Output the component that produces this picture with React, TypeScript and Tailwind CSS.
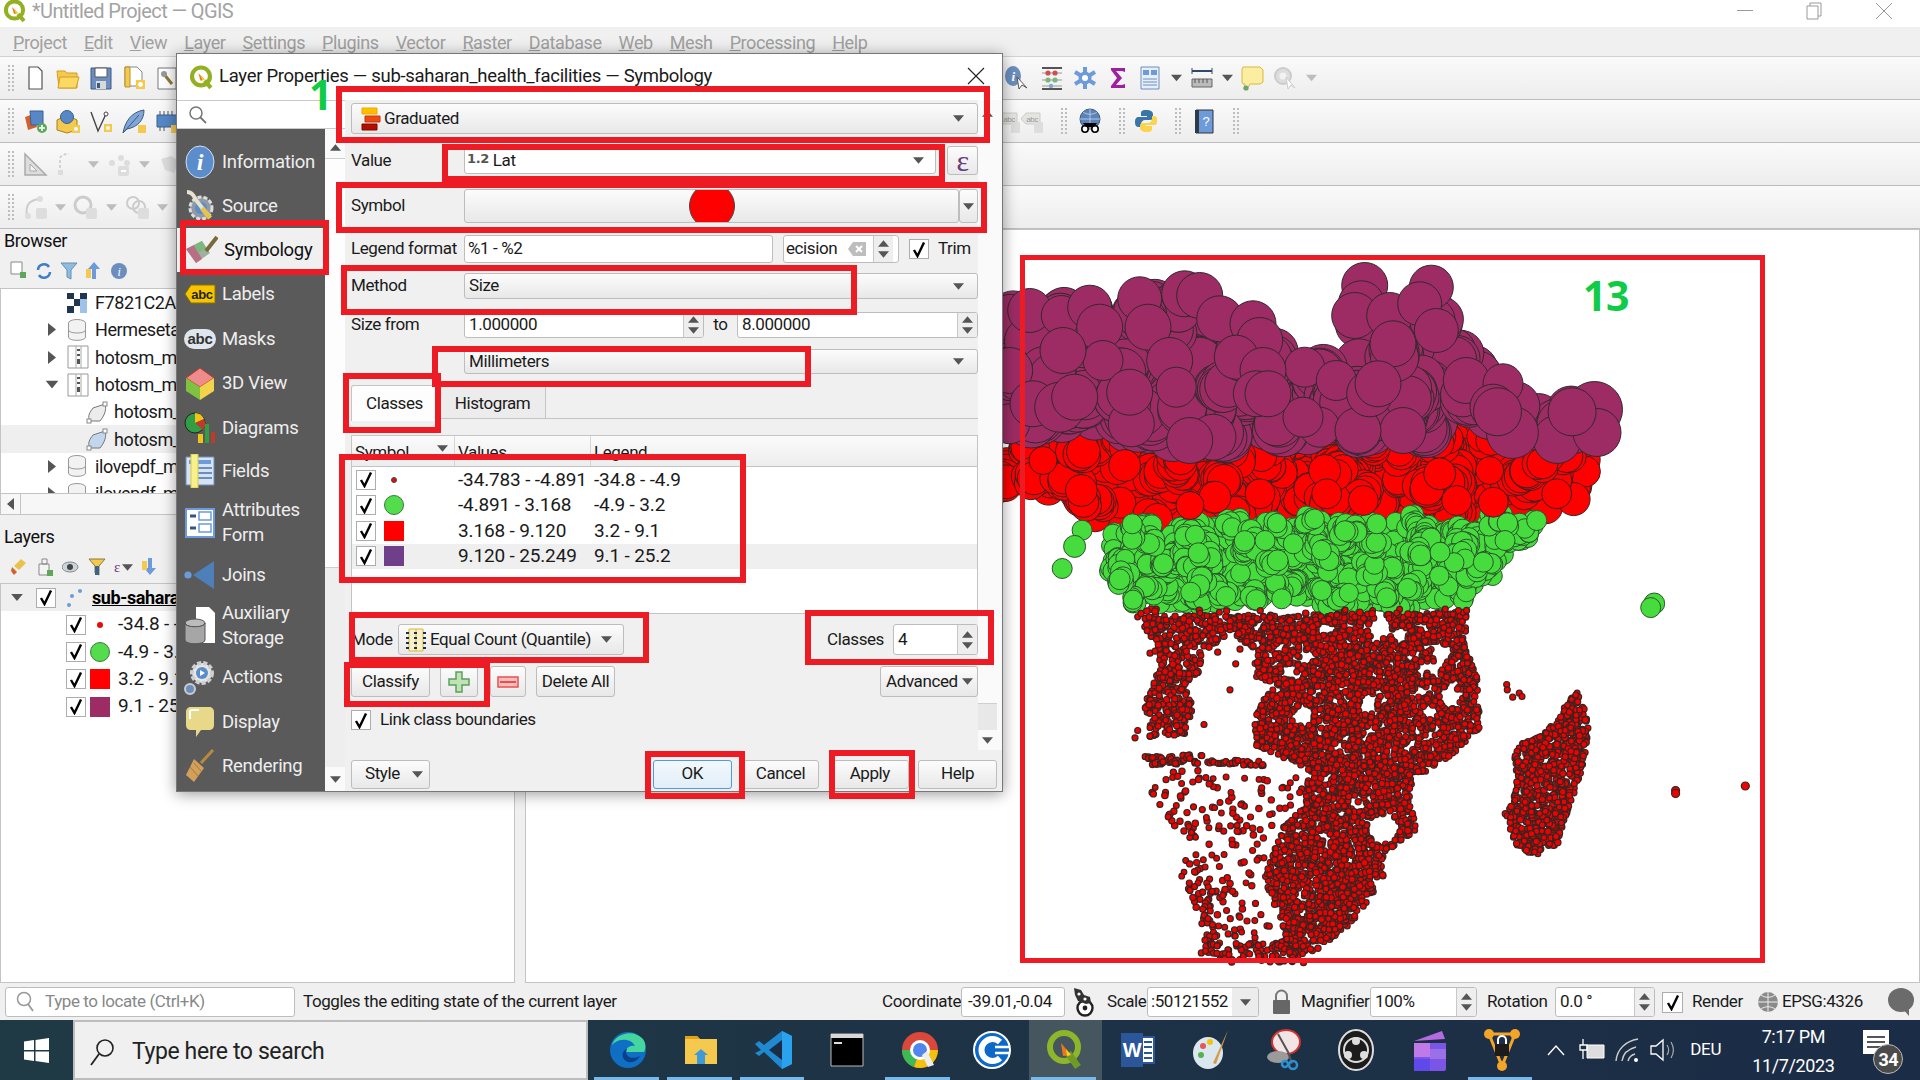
import type { ReactNode } from "react";

// ---- map data: seeded so every render gives the same picture ----
type Pt = [number, number];
type Dot = { x: number; y: number; r: number };

function rng(seed: number) {
  let a = seed;
  return () => {
    a = (a + 0x6d2b79f5) | 0;
    let t = Math.imul(a ^ (a >>> 15), 1 | a);
    t = (t + Math.imul(t ^ (t >>> 7), 61 | t)) ^ t;
    return ((t ^ (t >>> 14)) >>> 0) / 4294967296;
  };
}

function inPoly(p: Pt, poly: Pt[]) {
  let inside = false;
  for (let i = 0, j = poly.length - 1; i < poly.length; j = i++) {
    const [xi, yi] = poly[i];
    const [xj, yj] = poly[j];
    if (yi > p[1] !== yj > p[1] && p[0] < ((xj - xi) * (p[1] - yi)) / (yj - yi) + xi) inside = !inside;
  }
  return inside;
}

// coordinates were read off zoomed crops, these turn them back into page pixels
const z = (x: number, y: number): Pt => [1000 + x / 2.01, 250 + y / 2.17];
const a = (x: number, y: number): Pt => [1100 + x / 3, 480 + y / 3];
const b = (x: number, y: number): Pt => [1003 + x / 3, 260 + y / 3];
const c = (x: number, y: number): Pt => [1100 + x / 3, 700 + y / 3];

function fill(poly: Pt[], count: number, rMin: number, rMax: number, seed: number, keep?: (p: Pt, roll: number) => boolean) {
  const rand = rng(seed);
  const xs = poly.map((p) => p[0]);
  const ys = poly.map((p) => p[1]);
  const x0 = Math.min(...xs);
  const x1 = Math.max(...xs);
  const y0 = Math.min(...ys);
  const y1 = Math.max(...ys);
  const out: Dot[] = [];
  let guard = 0;
  while (out.length < count && guard < count * 80) {
    guard++;
    const p: Pt = [x0 + rand() * (x1 - x0), y0 + rand() * (y1 - y0)];
    if (!inPoly(p, poly)) continue;
    if (keep && !keep(p, rand())) continue;
    out.push({ x: p[0], y: p[1], r: rMin + rand() * (rMax - rMin) });
  }
  return out;
}

// facilities sit in towns, so the big circles come in tight clumps
function clumps(poly: Pt[], centers: number, each: number, spread: number, rMin: number, rMax: number, seed: number) {
  const rand = rng(seed + 1000);
  const out: Dot[] = [];
  for (const d of fill(poly, centers, rMin, rMax, seed)) {
    for (let i = 0; i < each; i++) {
      out.push({ x: d.x + (rand() - 0.5) * spread, y: d.y + (rand() - 0.5) * spread, r: d.r });
    }
  }
  return out;
}

function line(from: Pt, to: Pt, count: number, jitter: number, seed: number) {
  const rand = rng(seed);
  const out: Dot[] = [];
  for (let i = 0; i < count; i++) {
    const t = i / (count - 1);
    out.push({ x: from[0] + (to[0] - from[0]) * t + (rand() - 0.5) * jitter, y: from[1] + (to[1] - from[1]) * t + (rand() - 0.5) * jitter, r: 3 });
  }
  return out;
}

const spot = (list: [Pt, number][]) => list.map(([p, r]) => ({ x: p[0], y: p[1], r }));

const purplePoly: Pt[] = [z(-60, 130), z(60, 130), z(180, 130), z(285, 115), z(400, 100), z(500, 180), z(560, 240), z(620, 270), z(690, 260), z(725, 110), z(860, 95), z(900, 190), z(960, 270), z(1040, 340), z(1195, 350), z(1200, 395), z(1100, 400), z(900, 385), z(800, 395), z(620, 395), z(350, 410), z(200, 370), z(-60, 380)];
const redPoly: Pt[] = [[1000, 445], [1600, 430], [1575, 500], [1510, 515], [1100, 520], [1050, 490], [1000, 482]];
const greenPoly: Pt[] = [[1107, 556], [1110, 530], [1130, 522], [1543, 518], [1517, 543], [1477, 583], [1457, 603], [1140, 603], [1120, 582]];

const mainPoly: Pt[] = [a(385, 405), a(1100, 395), a(1095, 500), a(1130, 590), a(1140, 740), a(1070, 810), a(980, 875), a(940, 880), a(930, 960), a(950, 1050), c(850, 460), c(850, 530), c(780, 640), c(680, 735), c(600, 770), c(540, 760), c(550, 640), c(490, 540), c(550, 380), c(620, 310), c(600, 260), c(640, 220), c(590, 190), c(460, 130), c(470, 20), a(530, 610), a(470, 590), a(460, 520), a(395, 450)];
const westPoly: Pt[] = [a(110, 405), a(395, 405), a(395, 450), a(310, 520), a(300, 570), a(280, 600), a(250, 620), a(270, 650), a(280, 700), a(260, 760), a(150, 770), a(130, 690), a(160, 600), a(180, 520), a(130, 450)];
const sparsePoly: Pt[] = [c(140, 200), c(640, 230), c(600, 300), c(500, 400), c(490, 550), c(560, 620), c(560, 740), c(330, 740), c(260, 570), c(180, 350), c(140, 260)];
const madagascar: Pt[] = [a(1432, 630), c(1470, 60), c(1450, 190), c(1370, 440), c(1300, 470), c(1250, 440), c(1215, 340), c(1250, 240), c(1240, 170), c(1260, 130), c(1340, 95), c(1380, 40)];

// white patches inside the dense part: [x, y, rx, ry] in crop units
const gaps = [[840, 445, 35, 30], [900, 465, 22, 28], [1025, 515, 25, 25], [990, 560, 35, 18], [680, 445, 30, 18], [620, 530, 22, 22], [575, 585, 30, 12], [805, 665, 25, 30], [965, 635, 25, 15], [1050, 650, 30, 35], [990, 690, 25, 15], [610, 705, 32, 30], [735, 775, 15, 10], [810, 755, 20, 8], [850, 1045, 50, 45], [670, 1065, 20, 15], [775, 980, 18, 10], [720, 1000, 12, 8]];

function inGap(p: Pt) {
  const ax = (p[0] - 1100) * 3;
  const ay = (p[1] - 480) * 3;
  return gaps.some(([x, y, rx, ry]) => ((ax - x) / rx) ** 2 + ((ay - y) / ry) ** 2 < 1);
}

const redDots = [...fill(redPoly, 220, 15, 17, 13), ...clumps(redPoly, 100, 6, 12, 15, 17, 11)];
const purpleDots = [
  ...fill(purplePoly, 130, 22, 25, 9),
  ...clumps(purplePoly, 85, 6, 13, 22, 25, 7),
  ...spot([[b(80, 150), 22], [b(175, 165), 20], [b(260, 140), 22], [b(290, 200), 23], [b(410, 115), 22], [b(435, 200), 23], [b(545, 100), 23], [b(590, 105), 23], [b(650, 175), 23], [b(750, 190), 23], [b(770, 240), 23], [b(905, 320), 20], [b(1085, 75), 23], [b(1075, 130), 23], [b(1055, 165), 23], [b(1160, 165), 23], [b(1285, 80), 22], [b(1250, 130), 22], [b(1300, 210), 22], [b(1170, 250), 23], [b(700, 290), 22], [b(780, 330), 23], [b(1000, 360), 20], [b(300, 300), 20], [b(180, 270), 23], [b(500, 300), 23], [b(520, 380), 20], [b(20, 330), 23], [b(1390, 360), 23], [b(1500, 370), 20], [b(630, 530), 23], [b(560, 540), 23], [b(820, 490), 22], [b(950, 500), 20], [b(900, 470), 20], [b(20, 490), 20], [b(1470, 440), 23], [b(1520, 510), 23], [b(1200, 510), 23], [b(1065, 510), 23], [b(90, 430), 23], [b(170, 440), 25], [b(215, 410), 23], [b(385, 490), 23], [b(380, 395), 23], [b(760, 400), 23], [b(795, 400), 23], [b(1100, 400), 23], [b(1125, 370), 23], [z(1120, 410), 24], [z(1195, 345), 28], [z(1200, 395), 24], [z(1150, 350), 24], [z(1030, 395), 26], [z(1000, 350), 24]]),
];
const greenDots = [
  ...fill(greenPoly, 420, 9.5, 10.5, 29),
  ...clumps(greenPoly, 130, 7, 13, 9.5, 10.5, 23),
  ...spot([[z(165, 607), 10], [z(150, 642), 11], [z(125, 690), 10], [z(1315, 766), 10.5], [z(1308, 775), 10]]),
  ...spot([[a(97, 130), 10], [a(190, 250), 10], [a(272, 335), 10], [a(378, 348), 10], [a(545, 355), 10], [a(495, 180), 10], [a(580, 190), 10], [a(665, 330), 10], [a(830, 130), 10], [a(860, 352), 10], [a(1020, 215), 10], [a(1150, 245), 10], [a(1215, 180), 10], [a(1310, 120), 10]]),
];
const redOver = spot([[b(365, 615), 16], [b(630, 710), 16], [b(965, 630), 16], [b(235, 690), 16], [b(120, 600), 14], [b(1310, 640), 16], [b(1460, 630), 14], [a(345, 50), 16], [a(1180, 65), 15], [a(1370, 40), 15], [a(270, 75), 14], [a(480, 40), 15], [a(680, 40), 15], [a(790, 60), 15], [a(1070, 60), 15]]);
const smallDots = [
  ...fill(mainPoly, 4100, 2.8, 3.2, 31, (p) => !inGap(p)),
  ...fill(westPoly, 460, 2.8, 3.2, 33),
  ...fill(sparsePoly, 190, 2.8, 3.2, 35),
  ...line(c(145, 180), c(300, 175), 46, 9, 51),
  ...line(c(330, 180), c(490, 190), 28, 5, 53),
  ...line(c(320, 600), c(335, 740), 30, 16, 55),
  ...line(c(320, 750), c(600, 760), 80, 18, 57),
  ...line(c(270, 560), c(370, 585), 14, 14, 59),
  ...fill(madagascar, 760, 2.8, 3.2, 41),
  ...fill([a(110, 385), a(1100, 385), a(1100, 402), a(110, 402)], 28, 2.8, 3.2, 43),
  ...spot([[a(353, 515), 3], [a(407, 550), 3], [a(390, 628), 3], [a(312, 732), 3], [a(113, 750), 3], [a(105, 772), 3], [a(420, 506), 3], [a(440, 483), 3], [a(150, 518), 3], [a(165, 512), 3]]),
  ...spot([[a(1220, 612), 3], [a(1222, 628), 3], [a(1238, 650), 3], [a(1258, 638), 3], [a(1266, 648), 3], [z(1358, 1172), 4], [z(1358, 1178), 4], [z(1498, 1162), 4], [c(395, 785), 3]]),
];

function Circles({ dots, fillColor, stroke, width = 1 }: { dots: Dot[]; fillColor: string; stroke: string; width?: number }) {
  return (
    <g fill={fillColor} stroke={stroke} strokeWidth={width}>
      {dots.map((d, i) => (
        <circle key={i} cx={d.x.toFixed(1)} cy={d.y.toFixed(1)} r={d.r.toFixed(1)} />
      ))}
    </g>
  );
}

function MapCanvas() {
  return (
    <svg className="block w-full h-full" viewBox="526 230 1393 751">
      <Circles dots={redDots} fillColor="#ff0000" stroke="#3a2222" />
      <Circles dots={purpleDots} fillColor="#9c2c63" stroke="#33282f" />
      <Circles dots={greenDots} fillColor="#46dc3e" stroke="#2c532c" />
      <Circles dots={redOver} fillColor="#ff0000" stroke="#3a2222" />
      <Circles dots={smallDots} fillColor="#f00000" stroke="#3a2420" width={1.2} />
    </svg>
  );
}

// ---- small widgets ----
function Caret({ color = "#555", w = 11, h = 7 }: { color?: string; w?: number; h?: number }) {
  return (
    <svg width={w} height={h} viewBox="0 0 10 6" className="shrink-0">
      <path d="M0 0h10L5 6z" fill={color} />
    </svg>
  );
}

function CaretUp({ color = "#555" }: { color?: string }) {
  return (
    <svg width="11" height="7" viewBox="0 0 10 6" className="shrink-0">
      <path d="M0 6h10L5 0z" fill={color} />
    </svg>
  );
}

function Check({ size = "w-[20px] h-[20px]" }: { size?: string }) {
  return (
    <div className={`${size} shrink-0 bg-white border border-[#adadad] flex items-center justify-center`}>
      <svg width="14" height="17" viewBox="0 0 14 17">
        <path d="M2 9l3.5 6L12 1.5" fill="none" stroke="#000" strokeWidth="2.4" />
      </svg>
    </div>
  );
}

function Spin() {
  return (
    <div className="w-[20px] self-stretch shrink-0 border-l border-[#c8c8c8] bg-[#eeeeee] flex flex-col items-center justify-center gap-[4px]">
      <CaretUp />
      <Caret />
    </div>
  );
}

const comboClass = "flex items-center justify-between rounded-[3px] border border-[#bdbdbd] bg-gradient-to-b from-[#fcfcfc] to-[#e8e8e8]";
const inputClass = "flex items-center rounded-[3px] border border-[#bdbdbd] bg-white";

function Btn({ children, className = "" }: { children: ReactNode; className?: string }) {
  return <div className={`${comboClass} !justify-center h-[31px] ${className}`}>{children}</div>;
}

function QgisLogo({ size = 24 }: { size?: number }) {
  return (
    <svg width={size} height={size} viewBox="0 0 24 24" className="shrink-0">
      <circle cx="11.5" cy="11" r="8.6" fill="#fff" stroke="#93b023" strokeWidth="4" />
      <path d="M15 15l6 7" stroke="#93b023" strokeWidth="4" />
      <path d="M9 8l6 6-4 1z" fill="#ee7913" />
      <path d="M11 10l4 4-2 1z" fill="#f5d327" />
    </svg>
  );
}

// ---- toolbar icons ----
const Svg = ({ children, w = 26 }: { children: ReactNode; w?: number }) => (
  <svg width={w} height={w} viewBox="0 0 26 26" className="shrink-0">
    {children}
  </svg>
);

const IconNew = () => <Svg><path d="M7 2h9l4 4v18H7z" fill="#fff" stroke="#555" strokeWidth="1.2" /></Svg>;
const IconOpen = () => <Svg><path d="M2 6h8l2 2h10v15H4z" fill="#f5c94d" stroke="#d59c1e" /><path d="M5 12h19l-3 11H3z" fill="#fbd964" stroke="#d59c1e" /></Svg>;
const IconSave = () => <Svg><path d="M3 3h20v21H3z" fill="#6c8ebf" stroke="#3d5a80" /><path d="M7 3h12v9H7z" fill="#fff" stroke="#555" /><path d="M8 16h10v8H8z" fill="#d9d9d9" /><path d="M9 18h3v5H9z" fill="#3d5a80" /></Svg>;
const IconSaveAs = () => <Svg><path d="M4 2h12l5 5v14H4z" fill="#fff" stroke="#888" /><path d="M4 2h5v20H4z" fill="#f5c94d" stroke="#b8912a" /><path d="M15 15h9v9h-9z" fill="#f5c94d" /><circle cx="19.5" cy="19.5" r="2.4" fill="#fff" /></Svg>;
const IconDoc = () => <Svg><path d="M4 3h18v21H4z" fill="#fff" stroke="#777" /><path d="M9 8l9 11" stroke="#8a7b3b" strokeWidth="3" /><circle cx="10" cy="9" r="3" fill="#999" /></Svg>;
const IconStack = () => <Svg><path d="M3 9l9-3 3 13-9 3z" fill="#d3602c" /><path d="M8 3h13v14H9z" fill="#5787c6" stroke="#39618f" /><circle cx="20" cy="20" r="5" fill="#5da75a" /><path d="M17 20h6M20 17v6" stroke="#fff" strokeWidth="1.6" /></Svg>;
const IconCube = () => <Svg><path d="M2 12l10-5 10 5v10l-10 3-10-3z" fill="#f5c94d" stroke="#a5821a" /><circle cx="12" cy="9" r="6.5" fill="#5787c6" stroke="#39618f" /><path d="M17 17h8v8h-8z" fill="#f5c94d" /><circle cx="21" cy="21" r="2" fill="#fff" /></Svg>;
const IconVector = () => <Svg><path d="M3 4l7 19 8-17" fill="none" stroke="#444" strokeWidth="1.4" /><circle cx="18" cy="6" r="2" fill="#fff" stroke="#444" /><path d="M16 16h8v8h-8z" fill="#f5c94d" /><circle cx="20" cy="20" r="2" fill="#fff" /></Svg>;
const IconFeather = () => <Svg><path d="M2 25C4 14 10 4 23 2c0 10-6 17-17 19z" fill="#7fa6d6" stroke="#3d5a80" /><path d="M2 25L18 7" stroke="#3d5a80" /><path d="M17 17h8v8h-8z" fill="#f5c94d" /></Svg>;
const IconChip = () => <Svg><path d="M3 7h20v12H3z" fill="#5787c6" stroke="#39618f" /><path d="M6 3v4M10 3v4M14 3v4M18 3v4M6 19v4M10 19v4" stroke="#555" /><path d="M17 17h8v8h-8z" fill="#f5c94d" /></Svg>;
const IconRuler = () => <Svg><path d="M3 3v21h21z" fill="#ddd" stroke="#aaa" strokeWidth="1.5" /><path d="M8 13v7h7z" fill="#f3f3f3" stroke="#aaa" /></Svg>;
const IconGhost1 = () => <Svg><path d="M5 22V8c0-3 3-5 9-5" fill="none" stroke="#ccc" strokeWidth="1.6" strokeDasharray="3 2" /><rect x="3" y="19" width="5" height="5" fill="#ddd" /></Svg>;
const IconGhost2 = () => <Svg><circle cx="6" cy="12" r="3" fill="#ddd" /><circle cx="15" cy="7" r="3" fill="#ddd" /><circle cx="21" cy="12" r="3" fill="#ddd" /><rect x="12" y="15" width="11" height="10" rx="2" fill="#ddd" /><path d="M15 20h5" stroke="#fff" strokeWidth="2" /></Svg>;
const IconGhost3 = () => <Svg><path d="M4 8l10-3 8 5-5 12-9-3z" fill="#ddd" /></Svg>;
const IconGhost4 = () => <Svg><path d="M5 22C3 10 8 6 18 5" fill="none" stroke="#ccc" strokeWidth="2" /><circle cx="6" cy="22" r="3" fill="#ddd" /><circle cx="18" cy="5" r="3" fill="#ddd" /><rect x="14" y="14" width="11" height="11" rx="2" fill="#ddd" /></Svg>;
const IconGhost5 = () => <Svg><circle cx="11" cy="11" r="8" fill="none" stroke="#ccc" strokeWidth="3" /><rect x="14" y="14" width="11" height="11" rx="2" fill="#ddd" /></Svg>;
const IconGhost6 = () => <Svg><circle cx="9" cy="9" r="6" fill="none" stroke="#ccc" strokeWidth="2" /><circle cx="15" cy="13" r="6" fill="none" stroke="#ccc" strokeWidth="2" /><rect x="14" y="14" width="11" height="11" rx="2" fill="#ddd" /></Svg>;
const IconIdentify = () => <Svg><ellipse cx="10" cy="11" rx="8" ry="10" fill="#6c8ebf" /><text x="10" y="16" fontSize="13" fontStyle="italic" fontWeight="700" fill="#fff" textAnchor="middle" fontFamily="Liberation Serif">i</text><path d="M14 12l2 12 3-4 5 3z" fill="#fff" stroke="#555" /></Svg>;
const IconAbacus = () => <Svg><path d="M3 3h20M3 24h20" stroke="#555" strokeWidth="2" /><path d="M3 8h20M3 15h20M3 21h20" stroke="#999" /><circle cx="9" cy="8" r="2.6" fill="#d05050" /><circle cx="16" cy="8" r="2.6" fill="#d05050" /><circle cx="9" cy="15" r="2.6" fill="#7cb87c" /><circle cx="16" cy="15" r="2.6" fill="#7cb87c" /><circle cx="12" cy="21" r="2.2" fill="#7fa6d6" /></Svg>;
const IconGear = () => <Svg><path d="M13 2v22M3 7l20 12M3 19L23 7" stroke="#6c9adb" strokeWidth="4" /><circle cx="13" cy="13" r="6.5" fill="#6c9adb" /><circle cx="13" cy="13" r="3" fill="#fff" /></Svg>;
const IconSigma = () => <Svg><path d="M6 3h14v4l-3-1H11l6 7-6 7h6l3-1v4H6v-2l6-8-6-8z" fill="#a01fa0" /></Svg>;
const IconTable = () => <Svg><path d="M4 2h18v22H4z" fill="#e6eff8" stroke="#6c8ebf" /><path d="M6 5h6v5H6zM14 5h6v5h-6z" fill="#6c9adb" /><path d="M6 14h14M6 17h14M6 20h14" stroke="#6c8ebf" /></Svg>;
const IconMeasure = () => <Svg><path d="M3 6h20" stroke="#2f4a6d" strokeWidth="2" /><path d="M3 3v6M23 3v6" stroke="#2f4a6d" /><path d="M3 14h20v8H3z" fill="#bbb" stroke="#666" /><path d="M6 14v4M10 14v4M14 14v4M18 14v4" stroke="#555" /></Svg>;
const IconNote = () => <Svg><path d="M4 2h17l3 3v12l-3 2H11l-3 5H5l1-5H4l-1-2V4z" fill="#fbeea0" stroke="#d9b93a" /><circle cx="7" cy="23" r="2.6" fill="#6da36d" /></Svg>;
const IconGhostGear = () => <Svg><circle cx="12" cy="11" r="8" fill="#ddd" stroke="#ccc" strokeWidth="2" /><circle cx="12" cy="11" r="3.5" fill="#f2f2f2" /><path d="M15 12l2 12 3-4 4 3z" fill="#fff" stroke="#ccc" /></Svg>;
const IconGlobeFind = () => <Svg><circle cx="13" cy="11" r="10" fill="#5b83b8" stroke="#3d5a80" /><path d="M3 11h20M13 1v20M6 4c4 3 10 3 14 0" stroke="#c8d9ee" fill="none" strokeWidth=".8" /><circle cx="8" cy="21" r="3.2" fill="#fff" stroke="#000" strokeWidth="1.6" /><circle cx="18" cy="21" r="3.2" fill="#fff" stroke="#000" strokeWidth="1.6" /><path d="M6 15l3 4h8l3-4z" fill="#000" /></Svg>;
const IconPython = () => <Svg><path d="M13 2c-5 0-5 2-5 4v2h6v1H6c-3 0-4 2-4 5s1 5 4 5h2v-3c0-2 2-4 4-4h5c2 0 3-1 3-3V6c0-2-2-4-7-4z" fill="#3a75a8" /><path d="M14 24c5 0 5-2 5-4v-2h-6v-1h8c3 0 3-2 3-5s-1-4-3-4h-2v3c0 2-2 4-4 4H10c-2 0-3 1-3 3v2c0 2 2 4 7 4z" fill="#fcd34d" /></Svg>;
const IconHelpBook = () => <Svg><path d="M5 2h17v23H5z" fill="#6c9adb" stroke="#333" /><path d="M4 2h4v23H4z" fill="#2e3a46" /><text x="15" y="18" fontSize="13" fill="#fff" textAnchor="middle" fontFamily="Liberation Sans">?</text></Svg>;
const IconGhostLabel = () => <Svg><path d="M2 11l5-6h14v11H7z" fill="#e4e4e0" stroke="#ccc" /><text x="13" y="14" fontSize="8" fill="#999" textAnchor="middle" fontFamily="Liberation Sans">abc</text><rect x="15" y="14" width="9" height="11" rx="1" fill="#ddd" /></Svg>;

function Grip() {
  return <div className="w-[6px] h-[26px] shrink-0 border-x-2 border-dotted border-[#bdbdbd]" />;
}

// holds one toolbar icon in a fixed slot so the rows line up
function Slot({ children, w = "w-[33px]" }: { children?: ReactNode; w?: string }) {
  return <div className={`${w} h-full shrink-0 flex items-center justify-center`}>{children}</div>;
}

function Toolbar({ left, right }: { left: ReactNode; right?: ReactNode }) {
  return (
    <div className="h-[43px] flex items-center border-b border-[#bcbcbc] bg-gradient-to-b from-[#fafafa] to-[#ededed]">
      <div className="w-[1000px] h-full shrink-0 flex items-center pl-[8px]">
        <Grip />
        <div className="w-[4px] shrink-0" />
        {left}
      </div>
      <div className="flex items-center h-full">{right}</div>
    </div>
  );
}

// ---- dialog sidebar ----
const SideIcons: Record<string, ReactNode> = {
  Information: (
    <svg width="30" height="34" viewBox="0 0 30 34">
      <ellipse cx="15" cy="17" rx="14" ry="16" fill="#5b8ccb" stroke="#cfe0f4" />
      <text x="15" y="25" fontSize="24" fontStyle="italic" fontWeight="700" fill="#fff" textAnchor="middle" fontFamily="Liberation Serif">i</text>
    </svg>
  ),
  Source: (
    <svg width="32" height="32" viewBox="0 0 32 32">
      <circle cx="17" cy="18" r="11" fill="#8f9aa5" stroke="#ddd" strokeDasharray="4 2" strokeWidth="3" />
      <circle cx="17" cy="18" r="6" fill="#5b8ccb" />
      <path d="M3 2c5 0 7 4 9 8l14 18" stroke="#e7e2d0" strokeWidth="4" fill="none" />
      <path d="M18 18l8 10" stroke="#e9c24b" strokeWidth="5" />
    </svg>
  ),
  Symbology: (
    <svg width="34" height="30" viewBox="0 0 34 30">
      <path d="M2 14l16-8 8 12-14 10z" fill="#9fb0a0" />
      <path d="M2 14l8-4 8 14-6 4z" fill="#c25a7a" opacity=".75" />
      <path d="M10 10l8-4 4 7-8 5z" fill="#7cb87c" />
      <path d="M22 16L33 2" stroke="#7a6a3a" strokeWidth="4" />
    </svg>
  ),
  Labels: (
    <svg width="32" height="22" viewBox="0 0 32 22">
      <path d="M1 11l6-9h24v18H7z" fill="#f6c500" stroke="#8a7000" />
      <text x="18" y="16" fontSize="13" fontWeight="700" fill="#222" textAnchor="middle" fontFamily="Liberation Sans">abc</text>
    </svg>
  ),
  Masks: (
    <svg width="34" height="24" viewBox="0 0 34 24">
      <rect x="1" y="2" width="32" height="20" rx="10" fill="#dfe6ee" />
      <text x="17" y="17" fontSize="15" fontWeight="700" fill="#333" textAnchor="middle" fontFamily="Liberation Sans">abc</text>
    </svg>
  ),
  "3D View": (
    <svg width="30" height="34" viewBox="0 0 30 34">
      <path d="M15 1l14 10-14 9L1 11z" fill="#ef8b8b" stroke="#c0392b" />
      <path d="M1 11l14 9v13L1 24z" fill="#7fc241" />
      <path d="M29 11l-14 9v13l14-9z" fill="#f3d34a" />
    </svg>
  ),
  Diagrams: (
    <svg width="32" height="32" viewBox="0 0 32 32">
      <circle cx="11" cy="11" r="10" fill="#2f9e44" stroke="#222" />
      <path d="M11 11V1a10 10 0 0 1 9 6z" fill="#f0c419" />
      <path d="M11 11l9-4a10 10 0 0 1-1 11z" fill="#c0392b" />
      <path d="M14 22h5v9h-5z" fill="#f0c419" />
      <path d="M21 12h4v19h-4z" fill="#2f9e44" />
      <path d="M27 20h4v11h-4z" fill="#c0392b" />
    </svg>
  ),
  Fields: (
    <svg width="30" height="34" viewBox="0 0 30 34">
      <path d="M1 3h28v28H1z" fill="#d5e3f3" stroke="#6c8ebf" />
      <path d="M4 6h22v4H4z" fill="#6c9adb" />
      <path d="M12 14h15M12 19h15M12 24h15" stroke="#6c8ebf" strokeWidth="2" />
      <path d="M6 0h7v34H6z" fill="#f8f08a" stroke="#d8c94a" />
    </svg>
  ),
  "Attributes Form": (
    <svg width="30" height="30" viewBox="0 0 30 30">
      <path d="M1 1h28v28H1z" fill="#fff" stroke="#6c9adb" strokeWidth="2" />
      <path d="M5 8h6M5 20h6" stroke="#33587f" strokeWidth="3" />
      <path d="M14 4h12v8H14zM14 16h12v8H14z" fill="#fff" stroke="#6c9adb" strokeWidth="1.5" />
    </svg>
  ),
  Joins: (
    <svg width="32" height="30" viewBox="0 0 32 30">
      <circle cx="4" cy="15" r="3.6" fill="#6c9adb" />
      <path d="M30 1v28L9 15z" fill="#4f7fb8" />
    </svg>
  ),
  "Auxiliary Storage": (
    <svg width="32" height="40" viewBox="0 0 32 40">
      <path d="M12 1h13l6 6v30H12z" fill="#fff" />
      <ellipse cx="11" cy="17" rx="10" ry="4" fill="#bbb" stroke="#555" />
      <path d="M1 17v17c0 5 20 5 20 0V17c0 5-20 5-20 0z" fill="#a6a6a6" stroke="#555" />
    </svg>
  ),
  Actions: (
    <svg width="32" height="36" viewBox="0 0 32 36">
      <circle cx="18" cy="13" r="10" fill="#e6e6e6" stroke="#cfcfcf" strokeWidth="4" strokeDasharray="4 2" />
      <circle cx="18" cy="13" r="6" fill="#5b8ccb" />
      <path d="M16 10l5 3-5 3z" fill="#fff" />
      <circle cx="6" cy="29" r="5" fill="#6c8ebf" stroke="#ccc" strokeWidth="2" />
    </svg>
  ),
  Display: (
    <svg width="30" height="32" viewBox="0 0 30 32">
      <path d="M6 1h18c3 0 5 2 5 5v13c0 3-2 5-5 5H16l-5 7v-7H6c-3 0-5-2-5-5V6c0-3 2-5 5-5z" fill="#e8d98a" />
      <path d="M5 13V6c0-1 1-2 2-2h7" stroke="#fff" strokeWidth="2" fill="none" />
    </svg>
  ),
  Rendering: (
    <svg width="30" height="34" viewBox="0 0 30 34">
      <path d="M16 14L28 1" stroke="#b88a3f" strokeWidth="3" />
      <path d="M9 10l10 9-10 14-8-7z" fill="#d2a05a" />
      <path d="M5 18l8 9M9 14l7 8" stroke="#a87a38" />
    </svg>
  ),
};

function SideItem({ label, h = "h-[44px]", active = false }: { label: string; h?: string; active?: boolean }) {
  const lines = label.split(" ");
  return (
    <div className={`${h} flex items-center shrink-0 text-[18.5px] tracking-[-0.3px] ${active ? "bg-[#f0f0f0] text-[#111]" : "text-[#eeeeee]"}`}>
      <div className={`${active ? "w-[47px]" : "w-[45px]"} shrink-0 flex justify-center`}>{SideIcons[label]}</div>
      {label === "3D View" ? <span>{label}</span> : <div className="leading-[25px] flex flex-col">{lines.map((l) => <span key={l}>{l}</span>)}</div>}
    </div>
  );
}

// ---- dialog body pieces ----
function Row({ label, className, children }: { label?: string; className: string; children: ReactNode }) {
  return (
    <div className={`flex items-center ${className}`}>
      <div className="w-[113px] shrink-0">{label}</div>
      {children}
    </div>
  );
}

const classRows = [
  { values: "-34.783 - -4.891", legend: "-34.8 - -4.9", swatch: <div className="w-[6px] h-[6px] rounded-full bg-[#e60c0c] border border-[#444]" /> },
  { values: "-4.891 - 3.168", legend: "-4.9 - 3.2", swatch: <div className="w-[20px] h-[20px] rounded-full bg-[#53dd4c] border border-[#3b7a3b]" /> },
  { values: "3.168 - 9.120", legend: "3.2 - 9.1", swatch: <div className="w-[20px] h-[20px] bg-[#ff0000]" /> },
  { values: "9.120 - 25.249", legend: "9.1 - 25.2", swatch: <div className="w-[20px] h-[20px] bg-[#6f4089]" />, alt: true },
];

function GraduatedIcon() {
  return (
    <svg width="20" height="24" viewBox="0 0 20 24" className="shrink-0">
      <path d="M1 1h15v6H1z" fill="#ffc000" stroke="#f2a900" />
      <path d="M4 9h15v6H4z" fill="#ef4a10" stroke="#c0380c" />
      <path d="M1 17h15v6H1z" fill="#b30f00" stroke="#7c0a00" />
    </svg>
  );
}

function Dialog() {
  return (
    <div className="absolute left-[176px] top-[53px] w-[827px] h-[739px] flex flex-col bg-[#f0f0f0] border border-[#777] shadow-[0_2px_14px_rgba(0,0,0,0.4)] z-10">
      <div className="h-[46px] bg-white flex items-center pl-[12px] shrink-0 relative text-[18.5px] tracking-[-0.3px]">
        <QgisLogo size={25} />
        <span className="ml-[5px]">Layer Properties — sub-saharan_health_facilities — Symbology</span>
        <svg width="18" height="18" viewBox="0 0 18 18" className="absolute right-[17px] top-[13px]">
          <path d="M1 1l16 16M17 1L1 17" stroke="#222" strokeWidth="1.1" />
        </svg>
      </div>

      <div className="flex-1 flex min-h-0">
        <div className="w-[168px] shrink-0 flex flex-col">
          <div className="h-[29px] bg-white border-y border-[#c9c9c9] flex items-center pl-[11px]">
            <svg width="20" height="20" viewBox="0 0 20 20">
              <circle cx="8" cy="8" r="6" fill="none" stroke="#777" strokeWidth="1.5" />
              <path d="M12 12l6 6" stroke="#777" strokeWidth="1.8" />
            </svg>
          </div>
          <div className="flex-1 flex min-h-0">
            <div className="w-[148px] shrink-0 bg-[#5a5a5a] pt-[11px] flex flex-col">
              <SideItem label="Information" />
              <SideItem label="Source" />
              <SideItem label="Symbology" active />
              <SideItem label="Labels" />
              <SideItem label="Masks" h="h-[46px]" />
              <SideItem label="3D View" />
              <SideItem label="Diagrams" />
              <SideItem label="Fields" h="h-[42px]" />
              <SideItem label="Attributes Form" h="h-[61px]" />
              <SideItem label="Joins" />
              <SideItem label="Auxiliary Storage" h="h-[58px]" />
              <SideItem label="Actions" h="h-[45px]" />
              <SideItem label="Display" />
              <SideItem label="Rendering" />
            </div>
            <div className="w-[20px] flex flex-col bg-[#fafafa]">
              <div className="h-[30px] flex items-center justify-center border-b border-[#d0d0d0] pt-[8px]"><CaretUp /></div>
              <div className="h-[408px] bg-[#fdfdfd]" />
              <div className="flex-1 bg-[#eeeeee] border-t border-[#cfcfcf]" />
              <div className="h-[24px] flex items-center justify-center bg-[#fafafa]"><Caret /></div>
            </div>
          </div>
        </div>

        <div className="flex-1 flex flex-col min-w-0">
          <div className="h-[650px] flex shrink-0">
            <div className="w-[633px] shrink-0 pl-[6px]">
              <div className={`${comboClass} h-[31px] mt-[3px] pl-[9px] pr-[13px]`}>
                <div className="flex items-center gap-[3px]"><GraduatedIcon />Graduated</div>
                <Caret />
              </div>

              <Row label="Value" className="mt-[12px] h-[29px]">
                <div className="w-[472px] h-[27px] flex items-center justify-between rounded-[3px] border border-[#bdbdbd] bg-white pl-[2px] pr-[11px]">
                  <span><span className="font-['DejaVu_Sans',sans-serif] font-bold text-[13px] text-[#555] mr-[4px] align-[3px]">1.2</span>Lat</span>
                  <Caret />
                </div>
                <div className={`${comboClass} !justify-center ml-[11px] w-[31px] h-[29px] text-[30px] leading-[24px] text-[#6a3b7c] font-['Liberation_Serif',serif]`}>ε</div>
              </Row>

              <Row label="Symbol" className="mt-[14px] h-[34px]">
                <div className={`${comboClass} w-[495px] h-full overflow-hidden !justify-center`}>
                  <div className="w-[46px] h-[46px] rounded-full bg-[#ff0000] border border-[#444] shrink-0" />
                </div>
                <div className={`${comboClass} !justify-center w-[19px] h-full`}><Caret /></div>
              </Row>

              <Row label="Legend format" className="mt-[12px] h-[28px]">
                <div className={`${inputClass} w-[309px] h-full pl-[3px]`}>%1 - %2</div>
                <div className={`${inputClass} ml-[10px] w-[116px] h-full overflow-hidden`}>
                  <span className="pl-[2px] w-[57px] overflow-hidden whitespace-nowrap">ecision :</span>
                  <svg width="20" height="16" viewBox="0 0 20 16" className="mx-[6px]">
                    <path d="M6 1h13v14H6L1 8z" fill="#bdbdbd" />
                    <path d="M9 5l6 6M15 5l-6 6" stroke="#fff" strokeWidth="2" />
                  </svg>
                  <Spin />
                </div>
                <div className="ml-[10px]"><Check /></div>
                <span className="ml-[9px]">Trim</span>
              </Row>

              <Row label="Method" className="mt-[10px] h-[26px]">
                <div className={`${comboClass} flex-1 h-full pl-[4px] pr-[13px]`}>Size<Caret /></div>
              </Row>

              <Row label="Size from" className="mt-[13px] h-[26px]">
                <div className={`${inputClass} w-[240px] h-full pl-[4px] justify-between overflow-hidden`}>1.000000<Spin /></div>
                <div className="w-[33px] text-center">to</div>
                <div className={`${inputClass} flex-1 h-full pl-[4px] justify-between overflow-hidden`}>8.000000<Spin /></div>
              </Row>

              <Row className="mt-[11px] h-[25px]">
                <div className={`${comboClass} flex-1 h-full pl-[4px] pr-[13px]`}>Millimeters<Caret /></div>
              </Row>

              <div className="mt-[12px] h-[33px] flex items-end border-b border-[#c4c4c4]">
                <div className="w-[87px] h-[36px] -mb-[3px] bg-[#fdfdfd] border border-[#c4c4c4] border-b-0 rounded-t-[3px] flex items-center justify-center z-[1]">Classes</div>
                <div className="w-[106px] h-[31px] ml-[2px] pt-[2px] bg-[#ececec] border-r border-[#c4c4c4] flex items-center justify-center">Histogram</div>
              </div>

              <div className="mt-[16px] h-[179px] bg-white border-x border-b border-[#c4c4c4] border-t overflow-hidden">
                <div className="h-[31px] flex border-b border-[#c4c4c4] bg-gradient-to-b from-[#fbfbfb] to-[#ededed]">
                  <div className="w-[103px] border-r border-[#d5d5d5] pl-[3px] pt-[4px] flex justify-between pr-[6px]">Symbol<div className="pt-[5px]"><Caret /></div></div>
                  <div className="w-[136px] border-r border-[#d5d5d5] pl-[3px] pt-[4px]">Values</div>
                  <div className="pl-[3px] pt-[4px]">Legend</div>
                </div>
                {classRows.map((row) => (
                  <div key={row.values} className={`h-[25.5px] flex items-center text-[19px] tracking-[-0.15px] ${row.alt ? "bg-[#efefef]" : ""}`}>
                    <div className="w-[103px] flex items-center pl-[4px] shrink-0">
                      <Check />
                      <div className="w-[36px] flex justify-center">{row.swatch}</div>
                    </div>
                    <div className="w-[136px] shrink-0 pl-[3px] whitespace-nowrap">{row.values}</div>
                    <div className="pl-[3px] whitespace-nowrap">{row.legend}</div>
                  </div>
                ))}
              </div>

              <div className="mt-[10px] h-[31px] flex items-center">
                <span className="w-[47px] shrink-0">Mode</span>
                <div className={`${comboClass} w-[226px] h-full pl-[5px] pr-[11px]`}>
                  <div className="flex items-center gap-[2px]">
                    <svg width="24" height="24" viewBox="0 0 24 24" className="shrink-0">
                      <path d="M5 1h14v22H5z" fill="#f7f0c8" stroke="#d9b93a" />
                      <path d="M12 1v22" stroke="#d9b93a" />
                      <path d="M2 4h3v2H2zM2 9h3v2H2zM2 14h3v2H2zM2 19h3v2H2zM10 4h3v2h-3zM10 9h3v2h-3zM10 14h3v2h-3zM10 19h3v2h-3zM19 4h3v2h-3zM19 9h3v2h-3zM19 14h3v2h-3zM19 19h3v2h-3z" fill="#1f2d52" />
                    </svg>
                    <span className="whitespace-nowrap">Equal Count (Quantile)</span>
                  </div>
                  <Caret />
                </div>
                <span className="ml-auto mr-[9px]">Classes</span>
                <div className={`${inputClass} w-[85px] h-full pl-[4px] justify-between overflow-hidden`}>4<Spin /></div>
              </div>

              <div className="mt-[11px] h-[31px] flex items-center">
                <Btn className="w-[79px]">Classify</Btn>
                <Btn className="w-[38px] ml-[10px]">
                  <svg width="22" height="22" viewBox="0 0 22 22">
                    <path d="M8 1h6v7h7v6h-7v7H8v-7H1V8h7z" fill="#bfe3b4" stroke="#5d9e5d" strokeWidth="1.5" />
                  </svg>
                </Btn>
                <Btn className="w-[36px] ml-[12px]">
                  <svg width="22" height="12" viewBox="0 0 22 12">
                    <path d="M1 1h20v10H1z" fill="#f8bcbc" stroke="#e85050" strokeWidth="1.5" />
                    <path d="M3 5h16v2H3z" fill="#e85050" />
                  </svg>
                </Btn>
                <Btn className="w-[79px] ml-[10px]">Delete All</Btn>
                <div className={`${comboClass} ml-auto w-[98px] h-[31px] pl-[5px] pr-[4px]`}>Advanced<Caret /></div>
              </div>

              <div className="mt-[13px] h-[20px] flex items-center">
                <Check />
                <span className="ml-[9px]">Link class boundaries</span>
              </div>
            </div>

            <div className="w-[25px] flex flex-col items-center bg-[#fafafa] pr-[5px]">
              <div className="h-[26px] flex items-center"><CaretUp /></div>
              <div className="flex-1" />
              <div className="h-[27px] w-full bg-[#e8e8e8] border-t border-[#cfcfcf]" />
              <div className="h-[20px] flex items-center"><Caret /></div>
            </div>
          </div>

          <div className="flex-1 flex items-center pl-[6px] pr-[5px] pt-[7px]">
            <div className={`${comboClass} w-[79px] h-[29px] pl-[13px] pr-[6px]`}>Style<Caret /></div>
            <Btn className="!h-[29px] w-[79px] ml-[223px] !border-[#4d9be0] !from-[#f2f8fd] !to-[#e2eef8]">OK</Btn>
            <Btn className="!h-[29px] w-[78px] ml-[10px]">Cancel</Btn>
            <Btn className="!h-[29px] w-[79px] ml-[11px]">Apply</Btn>
            <Btn className="!h-[29px] w-[79px] ml-[9px]">Help</Btn>
          </div>
        </div>
      </div>
    </div>
  );
}

// ---- annotations drawn over the screenshot ----
const redBoxes = [
  "left-[336px] top-[86px] w-[654px] h-[57px]",
  "left-[442px] top-[144px] w-[503px] h-[38px]",
  "left-[336px] top-[182px] w-[651px] h-[51px]",
  "left-[341px] top-[265px] w-[516px] h-[50px]",
  "left-[432px] top-[346px] w-[379px] h-[41px]",
  "left-[343px] top-[373px] w-[98px] h-[60px]",
  "left-[339px] top-[454px] w-[407px] h-[129px]",
  "left-[349px] top-[612px] w-[300px] h-[51px]",
  "left-[805px] top-[610px] w-[189px] h-[55px]",
  "left-[344px] top-[662px] w-[146px] h-[45px]",
  "left-[645px] top-[751px] w-[100px] h-[48px]",
  "left-[829px] top-[750px] w-[86px] h-[49px]",
  "left-[180px] top-[220px] w-[149px] h-[55px]",
];

// ---- left docks ----
function DbIcon() {
  return (
    <svg width="20" height="24" viewBox="0 0 20 24" className="shrink-0">
      <ellipse cx="10" cy="5" rx="8.5" ry="3.5" fill="#f2f2f2" stroke="#999" />
      <path d="M1.5 5v14c0 4.5 17 4.5 17 0V5" fill="#f2f2f2" stroke="#999" />
      <path d="M1.5 12c0 4 17 4 17 0" fill="none" stroke="#999" />
    </svg>
  );
}

function ZipIcon() {
  return (
    <svg width="22" height="24" viewBox="0 0 22 24" className="shrink-0">
      <path d="M1 1h20v22H1z" fill="#fff" stroke="#999" />
      <path d="M9 1v22M14 1v22" stroke="#aaa" />
      <path d="M10 4h3v2h-3zM10 9h3v2h-3zM10 14h3v5h-3z" fill="#555" />
    </svg>
  );
}

function PolyIcon({ blue = false }: { blue?: boolean }) {
  return (
    <svg width="22" height="24" viewBox="0 0 22 24" className="shrink-0">
      <path d="M4 21c-3-5 0-9 3-13l12-4c2 6-1 12-5 17z" fill={blue ? "#c2d7ee" : "#ececec"} stroke="#777" />
      <rect x="1" y="19" width="4" height="4" fill="#fff" stroke="#888" />
      <rect x="17" y="2" width="4" height="4" fill="#fff" stroke="#888" />
    </svg>
  );
}

function Tri() {
  return (
    <svg width="8" height="13" viewBox="0 0 8 13" className="shrink-0">
      <path d="M0 0l8 6.5L0 13z" fill="#555" />
    </svg>
  );
}

function BrowserRow({ arrow, icon, text, pad = "pl-[47px]", selected = false }: { arrow?: ReactNode; icon: ReactNode; text: string; pad?: string; selected?: boolean }) {
  return (
    <div className={`h-[27.3px] flex items-center whitespace-nowrap ${pad} ${selected ? "bg-[#efefef]" : ""}`}>
      <div className="w-[19px] shrink-0 flex">{arrow}</div>
      <div className="w-[28px] shrink-0 flex">{icon}</div>
      {text}
    </div>
  );
}

function LegendRow({ swatch, text }: { swatch: ReactNode; text: string }) {
  return (
    <div className="h-[27.3px] flex items-center pl-[65px] whitespace-nowrap text-[19px] tracking-[-0.15px]">
      <Check />
      <div className="w-[32px] flex justify-center pr-[5px]">{swatch}</div>
      {text}
    </div>
  );
}

function LeftDocks() {
  return (
    <div className="w-[515px] shrink-0 flex flex-col text-[18px]">
      <div className="h-[25px] pl-[4px] flex items-end text-[#111]">Browser</div>
      <div className="h-[34px] pl-[10px] flex items-center gap-[7px]">
        <svg width="18" height="20" viewBox="0 0 18 20"><path d="M1 1h11v12H1z" fill="#fff" stroke="#888" /><rect x="10" y="11" width="6" height="6" fill="#5da75a" /></svg>
        <svg width="18" height="20" viewBox="0 0 18 20"><path d="M3 9a6 6 0 0 1 11-3M15 11a6 6 0 0 1-11 3" fill="none" stroke="#3d7fc4" strokeWidth="2.5" /></svg>
        <svg width="18" height="20" viewBox="0 0 18 20"><path d="M1 2h16l-6 7v9l-4-2V9z" fill="#8dbce0" stroke="#6b8fae" /></svg>
        <svg width="18" height="20" viewBox="0 0 18 20"><path d="M9 1l6 7h-4v10H7V8H3z" fill="#6c9adb" /><path d="M1 8h5v9H1z" fill="#f5c94d" /></svg>
        <svg width="18" height="20" viewBox="0 0 18 20"><circle cx="9" cy="10" r="8" fill="#6c8ebf" /><text x="9" y="15" fontSize="12" fontStyle="italic" fill="#fff" textAnchor="middle" fontFamily="Liberation Serif">i</text></svg>
      </div>
      <div className="h-[227px] bg-white border border-[#c4c4c4] flex flex-col shrink-0">
        <div className="flex-1 overflow-hidden">
          <BrowserRow
            text="F7821C2A-9D6F.tif"
            icon={
              <div className="grid grid-cols-3 w-[20px] h-[20px]">
                {["#1f3550", "#ffffff", "#1f3550", "#ffffff", "#1f3550", "#9ec2e8", "#1f3550", "#ffffff", "#9ec2e8"].map((col, i) => (
                  <div key={i} className="w-full h-full" style={{ background: col }} />
                ))}
              </div>
            }
          />
          <BrowserRow arrow={<Tri />} icon={<DbIcon />} text="Hermesetas.gpkg" />
          <BrowserRow arrow={<Tri />} icon={<ZipIcon />} text="hotosm_mwi_health.zip" />
          <BrowserRow arrow={<div className="rotate-90"><Tri /></div>} icon={<ZipIcon />} text="hotosm_mwi_health.zip" />
          <BrowserRow pad="pl-[66px]" icon={<PolyIcon />} text="hotosm_mwi_points" />
          <BrowserRow pad="pl-[66px]" icon={<PolyIcon blue />} text="hotosm_mwi_polygons" selected />
          <BrowserRow arrow={<Tri />} icon={<DbIcon />} text="ilovepdf_merged.gpkg" />
          <BrowserRow arrow={<Tri />} icon={<DbIcon />} text="ilovepdf_merged.gpkg" />
        </div>
        <div className="h-[21px] border-t border-[#c4c4c4] flex items-center bg-[#f7f7f7]">
          <div className="w-[20px] h-full border-r border-[#c4c4c4] flex items-center justify-center">
            <svg width="7" height="12" viewBox="0 0 7 12"><path d="M7 0L0 6l7 6z" fill="#555" /></svg>
          </div>
        </div>
      </div>
      <div className="h-[36px] pl-[4px] flex items-center pt-[6px] text-[#111]">Layers</div>
      <div className="h-[32px] pl-[10px] flex items-center gap-[8px]">
        <svg width="18" height="20" viewBox="0 0 18 20"><path d="M11 2l5 4-7 7-5-4z" fill="#e9c24b" /><path d="M2 10l5 5-3 3-3-4z" fill="#d3602c" /></svg>
        <svg width="18" height="20" viewBox="0 0 18 20"><path d="M3 7h10v11H3zM6 2h5v5H6z" fill="#f4f4f4" stroke="#888" /><rect x="11" y="13" width="6" height="6" fill="#5da75a" /></svg>
        <svg width="18" height="20" viewBox="0 0 18 20"><ellipse cx="8" cy="10" rx="8" ry="5" fill="#c8d4de" stroke="#888" /><circle cx="8" cy="10" r="3" fill="#444" /></svg>
        <svg width="18" height="20" viewBox="0 0 18 20"><path d="M1 2h16l-6 7v9l-4-2V9z" fill="#f5c94d" stroke="#8a7b3b" /><path d="M7 9h4v9H7z" fill="#3d6488" /></svg>
        <span className="text-[15px] text-[#6a3b7c] font-['Liberation_Serif',serif] -mr-[6px]">ε</span>
        <Caret />
        <svg width="18" height="20" viewBox="0 0 18 20"><path d="M9 18l6-7h-4V1H7v10H3z" fill="#6c9adb" /><path d="M1 4h5v9H1z" fill="#f5c94d" /></svg>
      </div>
      <div className="flex-1 bg-white border border-[#c4c4c4] overflow-hidden">
        <div className="h-[27px] bg-[#efefef] flex items-center pl-[10px] whitespace-nowrap">
          <Caret w={12} h={7} />
          <div className="ml-[13px]"><Check /></div>
          <svg width="20" height="22" viewBox="0 0 20 22" className="ml-[9px] shrink-0">
            <circle cx="4" cy="18" r="2" fill="#6c9adb" />
            <circle cx="7" cy="9" r="2" fill="#6c9adb" />
            <circle cx="15" cy="4" r="2" fill="#6c9adb" />
          </svg>
          <span className="ml-[7px] font-bold underline text-[#000]">sub-saharan_health_facilities</span>
        </div>
        <LegendRow text="-34.8 - -4.9" swatch={<div className="w-[6px] h-[6px] rounded-full bg-[#e60c0c]" />} />
        <LegendRow text="-4.9 - 3.2" swatch={<div className="w-[20px] h-[20px] rounded-full bg-[#53dd4c] border border-[#3b7a3b]" />} />
        <LegendRow text="3.2 - 9.1" swatch={<div className="w-[20px] h-[20px] bg-[#ff0000]" />} />
        <LegendRow text="9.1 - 25.2" swatch={<div className="w-[20px] h-[20px] bg-[#9c2c63]" />} />
      </div>
    </div>
  );
}

// ---- bottom bars ----
function StatusBar() {
  return (
    <div className="h-[37px] shrink-0 bg-[#f0f0f0] flex items-center whitespace-nowrap pt-[1px]">
      <div className={`${inputClass} ml-[5px] w-[290px] h-[30px] pl-[10px] gap-[9px] text-[#888]`}>
        <svg width="20" height="22" viewBox="0 0 20 22"><circle cx="8" cy="8" r="6.5" fill="none" stroke="#999" strokeWidth="1.5" /><path d="M12 13l5 7" stroke="#999" strokeWidth="1.8" /></svg>
        Type to locate (Ctrl+K)
      </div>
      <div className="ml-[8px] w-[579px]">Toggles the editing state of the current layer</div>
      <div className="w-[79px]">Coordinate</div>
      <div className={`${inputClass} w-[104px] h-[30px] pl-[6px]`}>-39.01,-0.04</div>
      <svg width="25" height="30" viewBox="0 0 25 30" className="ml-[5px] shrink-0">
        <circle cx="15" cy="21" r="7.5" fill="#fff" stroke="#222" strokeWidth="2.4" />
        <path d="M4 1l7 2 3 5 6 2 1 6-5 1-8-3-3-6z" fill="#333" />
        <circle cx="9" cy="7" r="1.6" fill="#fff" />
        <circle cx="15" cy="12" r="1.6" fill="#fff" />
        <circle cx="15" cy="21" r="2.4" fill="#222" />
      </svg>
      <div className="ml-[12px] w-[40px]">Scale</div>
      <div className="w-[112px] h-[30px] rounded-[3px] border border-[#bdbdbd] bg-white flex items-center justify-between overflow-hidden pl-[3px]">
        :50121552
        <div className="w-[26px] h-full bg-[#ececec] flex items-center justify-center"><Caret /></div>
      </div>
      <svg width="19" height="26" viewBox="0 0 19 26" className="ml-[13px] shrink-0">
        <path d="M4 12V7a5.5 5.5 0 0 1 11 0v5" fill="none" stroke="#777" strokeWidth="2" />
        <rect x="1" y="11" width="17" height="14" rx="1" fill="#666" />
      </svg>
      <div className="ml-[10px] w-[69px]">Magnifier</div>
      <div className={`${inputClass} w-[107px] h-[30px] pl-[4px] justify-between overflow-hidden`}>100%<Spin /></div>
      <div className="ml-[10px] w-[68px]">Rotation</div>
      <div className={`${inputClass} w-[100px] h-[30px] pl-[4px] justify-between overflow-hidden`}>0.0 °<Spin /></div>
      <div className="ml-[7px]"><Check size="w-[21px] h-[21px]" /></div>
      <div className="ml-[9px] w-[64px]">Render</div>
      <svg width="24" height="26" viewBox="0 0 24 26" className="shrink-0">
        <circle cx="12" cy="13" r="10" fill="#8a8a8a" />
        <path d="M2 13h20M12 3v20M5 6c4 3 10 3 14 0M5 20c4-3 10-3 14 0" stroke="#eee" fill="none" />
      </svg>
      <div className="ml-[2px] w-[104px]">EPSG:4326</div>
      <svg width="28" height="30" viewBox="0 0 28 30" className="ml-[1px] shrink-0">
        <ellipse cx="14" cy="13" rx="13" ry="12" fill="#6b6b6b" />
        <path d="M16 22l6 7v-9z" fill="#6b6b6b" />
      </svg>
    </div>
  );
}

function TaskIcon({ children, on = false, active = false }: { children: ReactNode; on?: boolean; active?: boolean }) {
  return (
    <div className={`w-[72.8px] h-full shrink-0 flex items-center justify-center relative ${active ? "bg-[#46565f]" : ""}`}>
      {children}
      {on && <div className="absolute left-[2px] right-[6px] bottom-0 h-[3px] bg-[#76b9ed]" />}
    </div>
  );
}

function TaskBar() {
  return (
    <div className="h-[60px] shrink-0 flex items-center bg-gradient-to-r from-[#203a45] to-[#1b2c46] text-white whitespace-nowrap">
      <div className="w-[73px] h-full shrink-0 flex items-center justify-center">
        <svg width="25" height="25" viewBox="0 0 25 25">
          <path d="M0 3.5l10-1.4V12H0zM11.5 2L25 0v12H11.5zM0 13.5h10v9.6L0 21.6zM11.5 13.5H25V25l-13.5-2z" fill="#fff" />
        </svg>
      </div>
      <div className="w-[515px] h-full shrink-0 bg-[#f0f0f0] border-[2px] border-[#bdbdbd] flex items-center pl-[14px] pt-[4px] text-[#222] text-[23px] gap-[17px]">
        <svg width="26" height="28" viewBox="0 0 26 28" className="shrink-0">
          <circle cx="16" cy="10" r="8" fill="none" stroke="#222" strokeWidth="1.6" />
          <path d="M10 16L2 27" stroke="#222" strokeWidth="1.8" />
        </svg>
        Type here to search
      </div>
      <div className="w-[4px] shrink-0" />
      <TaskIcon on>
        <svg width="38" height="40" viewBox="0 0 38 40">
          <circle cx="19" cy="20" r="18" fill="#0f6fc4" />
          <path d="M3 15C6 4 24-2 34 9c3 4 3 9 1 13H17c0-5 5-7 9-6C22 8 9 8 3 15z" fill="#45d6a0" />
          <path d="M19 32c-8-3-6-12-1-13-3 6 3 12 13 7-3 5-7 7-12 6z" fill="#0b3f8a" />
        </svg>
      </TaskIcon>
      <TaskIcon on>
        <svg width="34" height="34" viewBox="0 0 34 34">
          <path d="M1 3h12l3 3h17v25H1z" fill="#f5c94d" />
          <path d="M1 3h12l3 3H1z" fill="#e0a216" />
          <path d="M13 22h8v9h-8z" fill="#3f9ad6" />
          <path d="M10 22h14l-7-6z" fill="#3f9ad6" />
        </svg>
      </TaskIcon>
      <TaskIcon on>
        <svg width="38" height="40" viewBox="0 0 38 40">
          <path d="M27 1l10 5v28l-10 5L9 22l-5 4-4-3 6-3-6-6 4-3 5 4z" fill="#1f8ad2" />
          <path d="M27 10L14 20l13 10z" fill="#1b2c46" />
          <path d="M27 1l10 5v28l-10 5z" fill="#2aa2ee" />
        </svg>
      </TaskIcon>
      <TaskIcon>
        <svg width="34" height="34" viewBox="0 0 34 34">
          <path d="M1 1h32v32H1z" fill="#000" stroke="#bbb" />
          <path d="M1 1h32v4H1z" fill="#d8d8d8" />
          <path d="M4 9h8v2H4z" fill="#ddd" />
        </svg>
      </TaskIcon>
      <TaskIcon on>
        <svg width="40" height="40" viewBox="0 0 40 40">
          <circle cx="20" cy="20" r="18" fill="#d9483b" />
          <path d="M20 20L2 20a18 18 0 0 0 12 17z" fill="#3cba54" />
          <path d="M20 20l-6 17a18 18 0 0 0 24-17z" fill="#f4c20d" />
          <circle cx="20" cy="20" r="8.5" fill="#5186ec" stroke="#fff" strokeWidth="3" />
          <path d="M27 21l7 14-6 2-6-12z" fill="#eee" />
        </svg>
      </TaskIcon>
      <TaskIcon>
        <svg width="38" height="40" viewBox="0 0 38 40">
          <circle cx="19" cy="20" r="18" fill="#0c69c9" stroke="#fff" strokeWidth="2" />
          <path d="M27 12a11 11 0 1 0 0 16" fill="none" stroke="#fff" strokeWidth="6" />
          <path d="M22 17h14M22 23h14" stroke="#fff" strokeWidth="2.5" />
        </svg>
      </TaskIcon>
      <TaskIcon active on>
        <svg width="38" height="42" viewBox="0 0 38 42">
          <circle cx="18" cy="18" r="14" fill="none" stroke="#8fb52a" strokeWidth="6" />
          <path d="M22 24l10 14" stroke="#6f9a24" strokeWidth="7" />
          <path d="M15 14l10 12-8 1z" fill="#ee7913" />
          <path d="M20 20l5 6-4 1z" fill="#f5d327" />
        </svg>
      </TaskIcon>
      <TaskIcon>
        <div className="flex items-center">
          <div className="w-[22px] h-[34px] bg-[#2b579a] text-white text-[20px] font-bold flex items-center justify-center font-['Liberation_Sans',sans-serif] -mr-[2px] z-[1]">W</div>
          <div className="w-[14px] h-[28px] bg-white border-[2px] border-[#2b579a] flex flex-col justify-evenly px-[1px]">
            <div className="h-[2px] bg-[#2b579a]" />
            <div className="h-[2px] bg-[#2b579a]" />
            <div className="h-[2px] bg-[#2b579a]" />
            <div className="h-[2px] bg-[#2b579a]" />
          </div>
        </div>
      </TaskIcon>
      <TaskIcon>
        <svg width="38" height="44" viewBox="0 0 38 44">
          <ellipse cx="16" cy="25" rx="15" ry="16" fill="#dbe7ee" />
          <circle cx="11" cy="18" r="3" fill="#e2565e" />
          <circle cx="9" cy="27" r="3" fill="#55b24a" />
          <circle cx="18" cy="14" r="3" fill="#f4c20d" />
          <path d="M36 2L24 36l-3-1z" fill="#d59a4a" />
        </svg>
      </TaskIcon>
      <TaskIcon>
        <svg width="36" height="44" viewBox="0 0 36 44">
          <ellipse cx="20" cy="14" rx="14" ry="12" fill="#f3e5e5" stroke="#d0332b" strokeWidth="2" />
          <ellipse cx="12" cy="29" rx="11" ry="6" fill="#9b9b9b" />
          <path d="M12 6l10 18 4 12" stroke="#555" strokeWidth="2" fill="none" />
          <circle cx="27" cy="37" r="4" fill="none" stroke="#2e8fd1" strokeWidth="2.5" />
          <circle cx="19" cy="36" r="3" fill="none" stroke="#2e8fd1" strokeWidth="2.5" />
        </svg>
      </TaskIcon>
      <TaskIcon>
        <svg width="36" height="44" viewBox="0 0 36 44">
          <ellipse cx="18" cy="22" rx="17" ry="20" fill="#1c1c1c" stroke="#ddd" strokeWidth="2" />
          <circle cx="18" cy="22" r="12" fill="none" stroke="#ddd" strokeWidth="2" />
          <circle cx="18" cy="13" r="4" fill="#ddd" />
          <circle cx="10" cy="27" r="4" fill="#ddd" />
          <circle cx="26" cy="27" r="4" fill="#ddd" />
        </svg>
      </TaskIcon>
      <TaskIcon>
        <svg width="38" height="42" viewBox="0 0 38 42">
          <path d="M4 12L32 2l3 8z" fill="#b46ae0" />
          <path d="M4 14h32v26a2 2 0 0 1-2 2H6a2 2 0 0 1-2-2z" fill="#7a55e6" />
          <path d="M4 14h16v14H4z" fill="#c07ae8" />
          <path d="M20 20h16v10H20z" fill="#9b6fe8" />
          <path d="M4 30h16v12H4z" fill="#5f49ea" />
        </svg>
      </TaskIcon>
      <TaskIcon on>
        <svg width="38" height="44" viewBox="0 0 38 44">
          <path d="M6 6h26L19 38z" fill="none" stroke="#f2a526" strokeWidth="3" />
          <circle cx="6" cy="6" r="5" fill="#f2a526" />
          <circle cx="32" cy="6" r="5" fill="#f2a526" />
          <circle cx="19" cy="38" r="5" fill="#f2a526" />
          <path d="M12 16h14v12H12z" fill="#1c1c1c" />
          <path d="M15 16v-4a4 4 0 0 1 8 0v4" fill="none" stroke="#fff" strokeWidth="2" />
        </svg>
      </TaskIcon>

      <div className="w-[9px] shrink-0" />
      <svg width="18" height="12" viewBox="0 0 18 12" className="shrink-0"><path d="M1 11l8-9 8 9" fill="none" stroke="#fff" strokeWidth="1.4" /></svg>
      <svg width="26" height="26" viewBox="0 0 26 26" className="ml-[14px] shrink-0">
        <path d="M8 8h17v13H8z" fill="#ddd" stroke="#fff" />
        <path d="M4 2v6M1 8h7v5H1zM4 13v9" stroke="#fff" strokeWidth="1.3" fill="none" />
      </svg>
      <svg width="28" height="26" viewBox="0 0 28 26" className="ml-[9px] shrink-0">
        <path d="M2 24C3 12 12 4 24 2M8 24c1-7 6-12 14-14M14 24c1-4 3-6 7-7" fill="none" stroke="#ccc" strokeWidth="1.4" />
        <circle cx="22" cy="23" r="2" fill="#fff" />
      </svg>
      <svg width="26" height="26" viewBox="0 0 26 26" className="ml-[7px] shrink-0">
        <path d="M2 9h5l7-6v20l-7-6H2z" fill="none" stroke="#fff" strokeWidth="1.3" />
        <path d="M18 8c2 3 2 7 0 10M22 5c3 5 3 11 0 16" fill="none" stroke="#aaa" strokeWidth="1.2" />
      </svg>
      <span className="ml-[15px] w-[42px]">DEU</span>
      <div className="ml-[11px] w-[100px] flex flex-col items-center leading-[29px] pt-[2px] text-[18px]">
        <span>7:17 PM</span>
        <span>11/7/2023</span>
      </div>
      <div className="ml-[20px] relative w-[46px] h-[46px] shrink-0">
        <div className="absolute left-0 top-[3px] w-[26px] h-[24px] bg-white flex flex-col gap-[3px] justify-center px-[4px]">
          <div className="h-[2px] bg-[#555]" />
          <div className="h-[2px] bg-[#555]" />
          <div className="h-[2px] bg-[#555]" />
        </div>
        <div className="absolute left-[10px] top-[17px] w-[30px] h-[30px] rounded-full bg-[#4b4b4b] border border-[#bbb] flex items-center justify-center font-bold text-[18px]">34</div>
      </div>
    </div>
  );
}

export default function App() {
  return (
    <div className="relative w-[1920px] h-[1080px] overflow-hidden flex flex-col bg-[#f0f0f0] text-[#1a1a1a] text-[17px] tracking-[-0.4px] font-['Roboto',sans-serif]">
      <div className="h-[27px] shrink-0 bg-white flex items-center pl-[3px] pb-[6px] relative overflow-hidden">
        <QgisLogo size={24} />
        <span className="ml-[5px] text-[#a3a3a3] text-[20px] tracking-[-0.6px]">*Untitled Project — QGIS</span>
        <div className="ml-auto flex items-center h-full pr-[27px] gap-[53px]">
          <div className="w-[16px] h-px bg-[#999]" />
          <svg width="16" height="18" viewBox="0 0 16 18"><path d="M4 4V1h11v13h-3M1 4h11v13H1z" fill="none" stroke="#999" /></svg>
          <svg width="18" height="18" viewBox="0 0 18 18"><path d="M1 1l16 16M17 1L1 17" stroke="#999" /></svg>
        </div>
      </div>

      <div className="h-[30px] shrink-0 flex items-center pl-[13px] pt-[2px] gap-[17px] text-[18px] text-[#a0a0a0] border-b border-[#d2d2d2]">
        {["Project", "Edit", "View", "Layer", "Settings", "Plugins", "Vector", "Raster", "Database", "Web", "Mesh", "Processing", "Help"].map((m) => (
          <span key={m}><span className="underline">{m[0]}</span>{m.slice(1)}</span>
        ))}
      </div>

      <Toolbar
        left={<><Slot><IconNew /></Slot><Slot><IconOpen /></Slot><Slot><IconSave /></Slot><Slot><IconSaveAs /></Slot><Slot><IconDoc /></Slot></>}
        right={
          <>
            <Slot w="w-[32px]"><IconIdentify /></Slot>
            <Slot w="w-[40px]"><IconAbacus /></Slot>
            <Slot w="w-[26px]"><IconGear /></Slot>
            <Slot w="w-[40px]"><IconSigma /></Slot>
            <Slot w="w-[24px]"><IconTable /></Slot>
            <Slot w="w-[28px]"><Caret w={11} h={8} /></Slot>
            <Slot w="w-[24px]"><IconMeasure /></Slot>
            <Slot w="w-[26px]"><Caret w={11} h={8} /></Slot>
            <Slot w="w-[24px]"><IconNote /></Slot>
            <Slot w="w-[40px]"><IconGhostGear /></Slot>
            <Slot w="w-[14px]"><Caret color="#bdbdbd" w={11} h={8} /></Slot>
          </>
        }
      />
      <Toolbar
        left={<><Slot><IconStack /></Slot><Slot><IconCube /></Slot><Slot><IconVector /></Slot><Slot><IconFeather /></Slot><Slot><IconChip /></Slot></>}
        right={
          <>
            <Slot w="w-[18px]"><IconGhostLabel /></Slot>
            <Slot w="w-[28px]"><IconGhostLabel /></Slot>
            <Slot w="w-[15px]" />
            <Grip />
            <Slot w="w-[46px]"><IconGlobeFind /></Slot>
            <Slot w="w-[6px]" />
            <Grip />
            <Slot w="w-[42px]"><IconPython /></Slot>
            <Slot w="w-[8px]" />
            <Grip />
            <Slot w="w-[46px]"><IconHelpBook /></Slot>
            <Slot w="w-[6px]" />
            <Grip />
          </>
        }
      />
      <Toolbar
        left={
          <>
            <Slot><IconRuler /></Slot>
            <Slot><IconGhost1 /></Slot>
            <Slot w="w-[18px]"><Caret color="#bdbdbd" /></Slot>
            <Slot><IconGhost2 /></Slot>
            <Slot w="w-[18px]"><Caret color="#bdbdbd" /></Slot>
            <Slot><IconGhost3 /></Slot>
          </>
        }
      />
      <Toolbar
        left={
          <>
            <Slot w="w-[34px]"><IconGhost4 /></Slot>
            <Slot w="w-[16px]"><Caret color="#bdbdbd" /></Slot>
            <Slot w="w-[34px]"><IconGhost5 /></Slot>
            <Slot w="w-[18px]"><Caret color="#bdbdbd" /></Slot>
            <Slot w="w-[34px]"><IconGhost6 /></Slot>
            <Slot w="w-[16px]"><Caret color="#bdbdbd" /></Slot>
          </>
        }
      />

      <div className="flex-1 flex min-h-0">
        <LeftDocks />
        <div className="w-[10px] shrink-0" />
        <div className="flex-1 bg-white border border-[#c4c4c4] overflow-hidden">
          <MapCanvas />
        </div>
      </div>

      <StatusBar />
      <TaskBar />

      <Dialog />

      {redBoxes.map((pos) => (
        <div key={pos} className={`absolute ${pos} border-[6px] border-[#ed1c24] z-20`} />
      ))}
      <div className="absolute left-[1020px] top-[255px] w-[745px] h-[708px] border-[5px] border-[#ed1c24] z-20" />
      <div className="absolute left-[309px] top-[70px] text-[41px] leading-[48px] font-bold text-[#0fcb47] z-30 font-['Open_Sans',sans-serif]">1</div>
      <div className="absolute left-[1583px] top-[267px] text-[41px] leading-[56px] font-bold text-[#0fcb47] z-30 font-['Open_Sans',sans-serif]">13</div>
    </div>
  );
}
